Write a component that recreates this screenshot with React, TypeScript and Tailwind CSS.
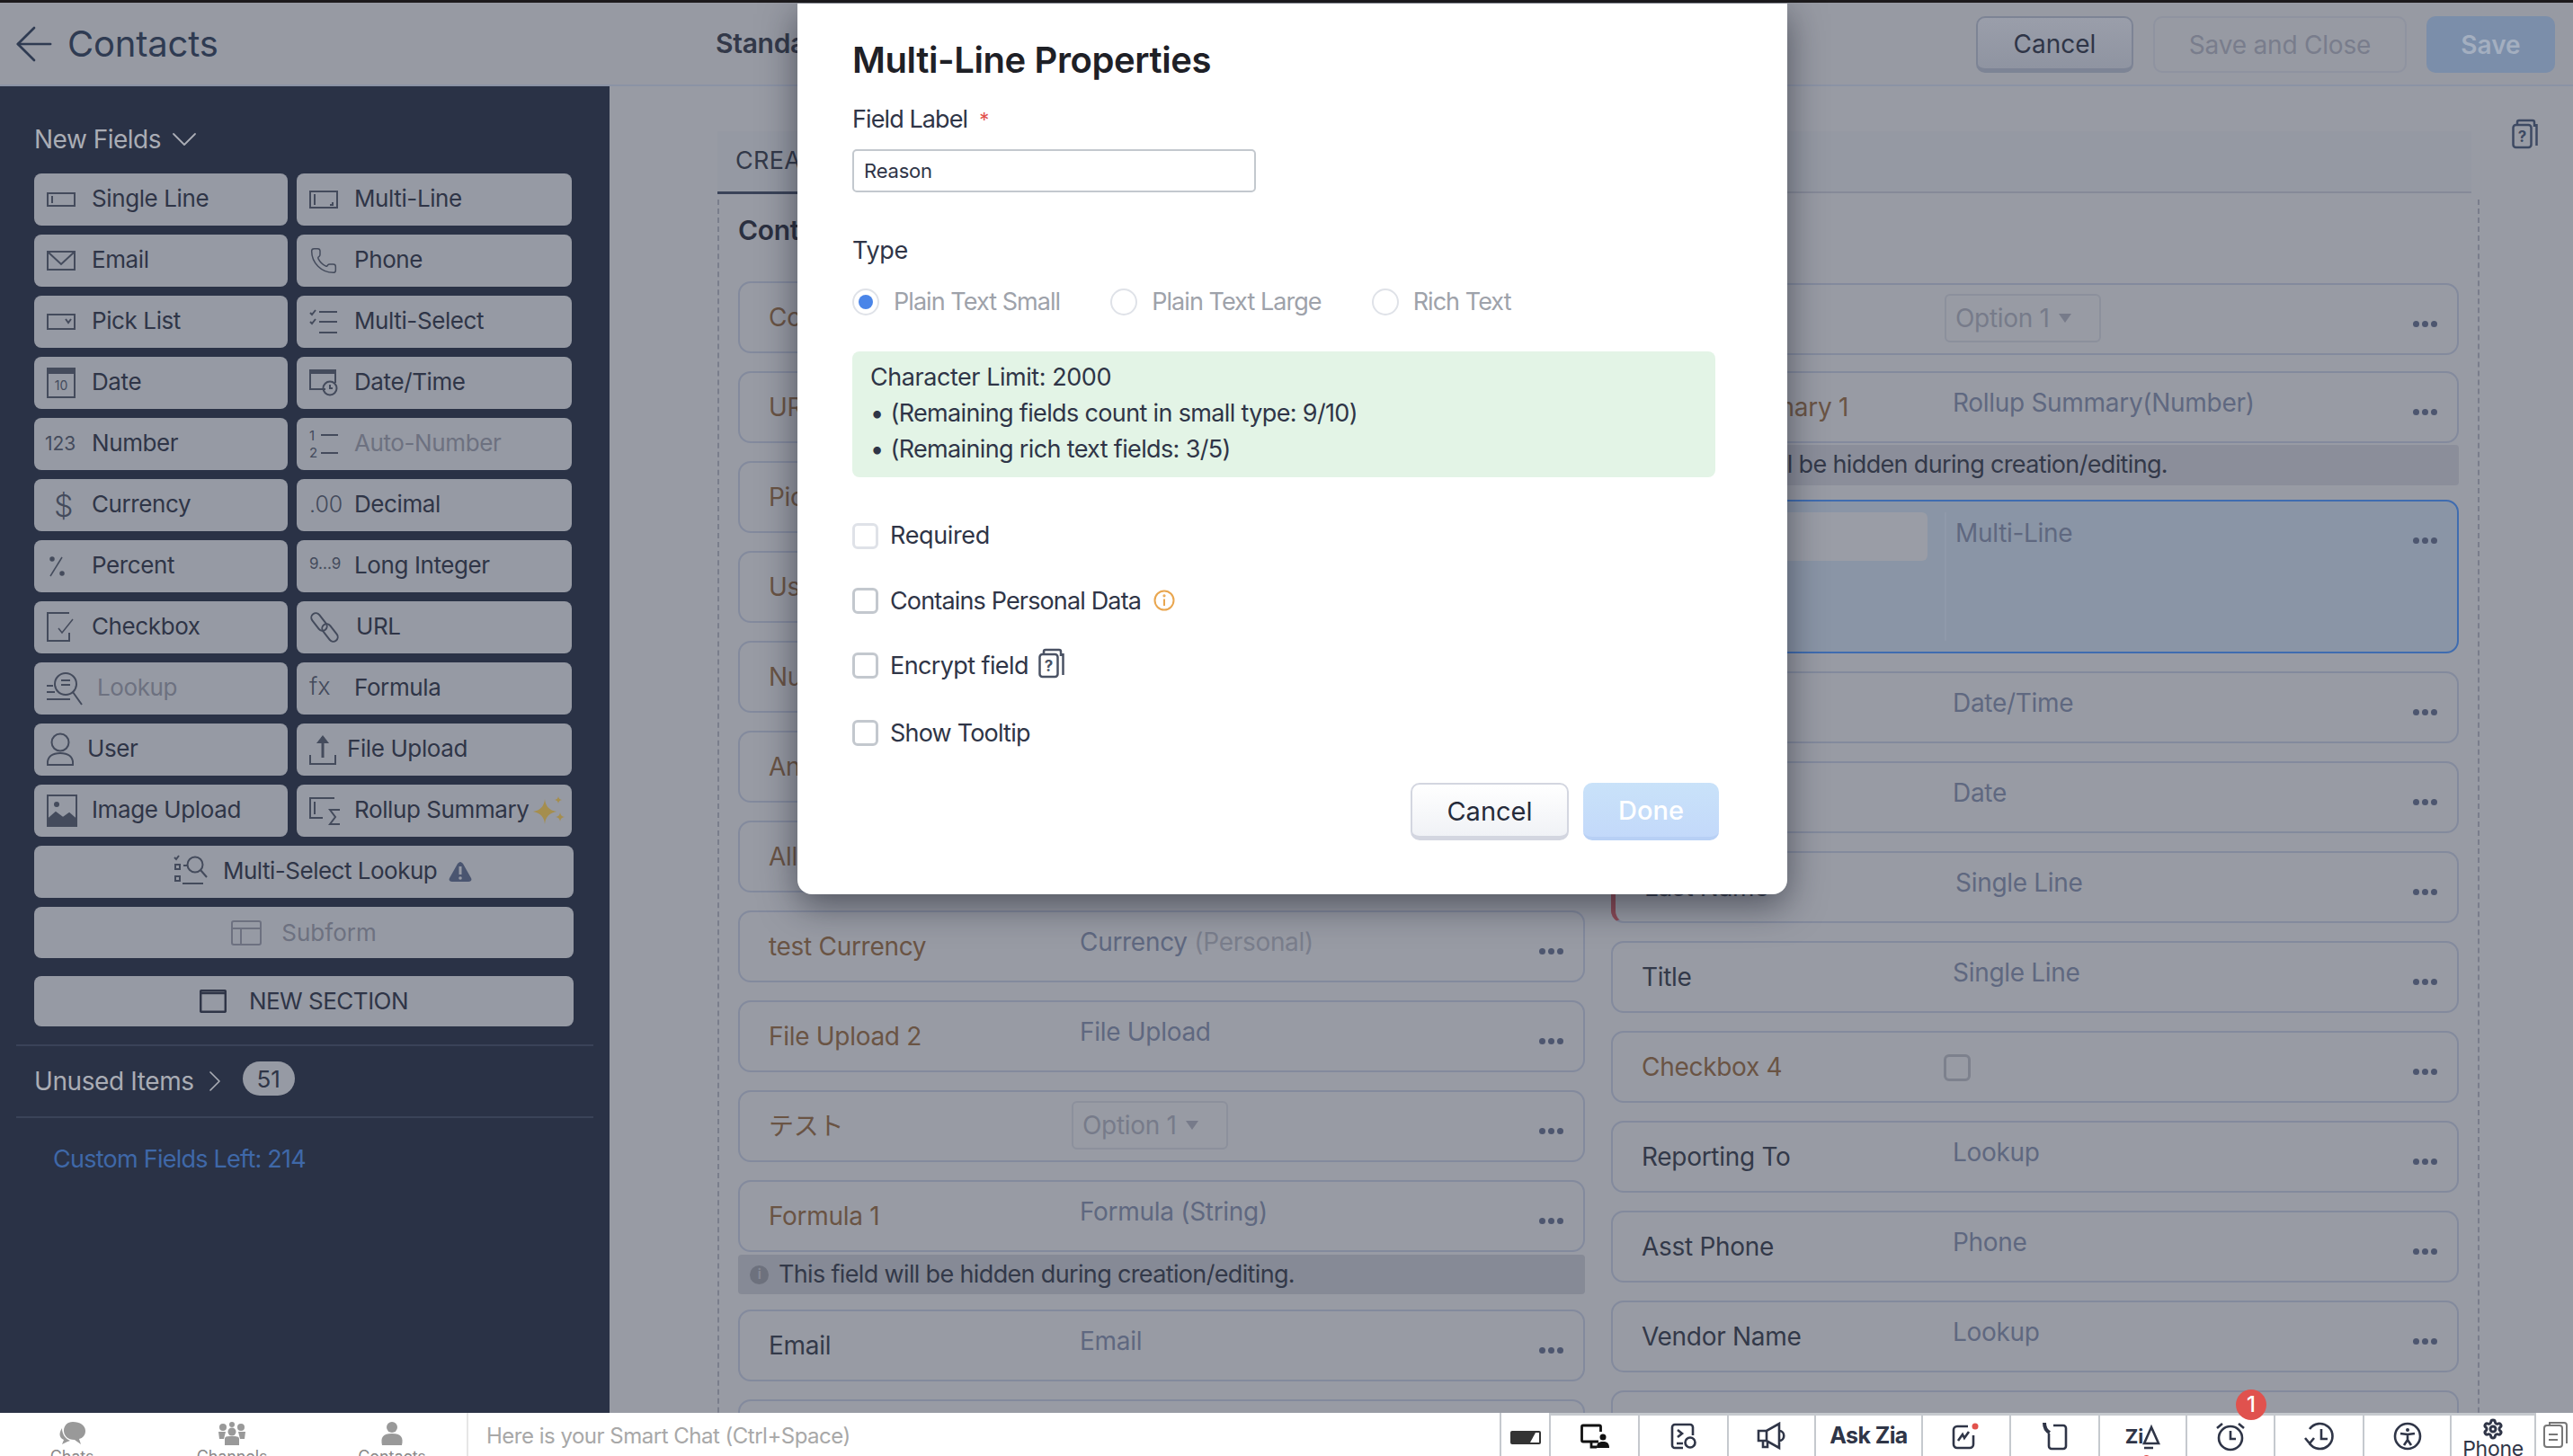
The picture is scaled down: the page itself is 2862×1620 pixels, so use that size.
import { ArrowLeft, ChevronDown, ChevronRight, Phone as PhoneGlyph, Settings } from "lucide-react";
import type { ReactNode } from "react";

// thin line icons for the field palette, all take their colour from the text
function Line({ w, h, children, className }: { w: number; h: number; children: ReactNode; className?: string }) {
  return (
    <svg width={w} height={h} viewBox={`0 0 ${w} ${h}`} fill="none" stroke="currentColor" strokeWidth="2" className={className}>
      {children}
    </svg>
  );
}

const SingleLineIcon = () => (
  <Line w={32} h={16}><rect x="1" y="1" width="30" height="14" /><path d="M6 4v8" /></Line>
);
const MultiLineIcon = () => (
  <Line w={32} h={20}><rect x="1" y="1" width="30" height="18" /><path d="M6 4v12M26 13v3h-3" /></Line>
);
const EmailIcon = () => (
  <Line w={32} h={22}><rect x="1" y="1" width="30" height="20" /><path d="M1 1l15 14L31 1" /></Line>
);
const PhoneIcon = () => <PhoneGlyph size={32} strokeWidth={1.1} />;
const PickListIcon = () => (
  <Line w={32} h={18}><rect x="1" y="1" width="30" height="16" /><path d="M21 6l3 4 3-4" /></Line>
);
const MultiSelectIcon = () => (
  <Line w={32} h={32}><path d="M1 6l2 2 4-5M1 16l2 2 4-5M11 5h20M11 16h20M11 28h20" /></Line>
);
const DateIcon = () => (
  <svg width="32" height="34" viewBox="0 0 32 34" fill="none" stroke="currentColor" strokeWidth="2">
    <rect x="1" y="3" width="30" height="30" />
    <rect x="1" y="1" width="30" height="5" fill="currentColor" />
    <text x="16" y="25" textAnchor="middle" fontSize="14" stroke="none" fill="currentColor">10</text>
  </svg>
);
const DateTimeIcon = () => (
  <Line w={32} h={30}>
    <path d="M18 22H1V1h28v14" /><path d="M1 3h28" strokeWidth="4" /><circle cx="23" cy="21" r="7.5" /><path d="M23 17v4h3" />
  </Line>
);
const AutoNumberIcon = () => (
  <svg width="32" height="36" viewBox="0 0 32 36" fill="none" stroke="currentColor" strokeWidth="2">
    <text x="0" y="14" fontSize="15" stroke="none" fill="currentColor">1</text>
    <text x="0" y="33" fontSize="15" stroke="none" fill="currentColor">2</text>
    <path d="M13 8h19M13 28h19" />
  </svg>
);
const PercentIcon = () => (
  <svg width="20" height="26" viewBox="0 0 20 26" fill="none" stroke="currentColor" strokeWidth="1.5">
    <path d="M15 3L2 24" /><circle cx="4" cy="5" r="2" fill="currentColor" /><circle cx="15" cy="21" r="2" fill="currentColor" />
  </svg>
);
const CheckboxIcon = () => (
  <Line w={30} h={34}><path d="M25 1H1v31h24v-9" /><path d="M13 18l4 5 12-15" strokeWidth="1.5" /></Line>
);
const UrlIcon = () => (
  <svg width="34" height="34" viewBox="0 0 34 34" fill="none" stroke="currentColor" strokeWidth="2">
    <rect x="0" y="6" width="22" height="10" rx="5" transform="rotate(52 11 11)" />
    <rect x="12" y="18" width="22" height="10" rx="5" transform="rotate(52 23 23)" />
  </svg>
);
const LookupIcon = () => (
  <Line w={40} h={40}>
    <circle cx="21" cy="15" r="12" /><path d="M16 11h10M16 16h10M29 24l10 14M0 17h7M0 24h9M0 32h26" />
  </Line>
);
const UserIcon = () => (
  <Line w={30} h={38}>
    <circle cx="15" cy="11" r="9.5" /><path d="M1 36c-1-10 6-13 14-13s15 3 14 13z" />
  </Line>
);
const UploadIcon = () => (
  <svg width="30" height="36" viewBox="0 0 30 36" fill="none" stroke="currentColor" strokeWidth="2">
    <path d="M1 24v10h28V24" /><path d="M15 27V4" strokeWidth="3" /><path d="M8 11l7-9 7 9z" fill="currentColor" stroke="none" />
  </svg>
);
const ImageIcon = () => (
  <svg width="34" height="36" viewBox="0 0 34 36" fill="none" stroke="currentColor" strokeWidth="2">
    <rect x="1" y="1" width="32" height="34" />
    <path d="M1 35V28l9-8 8 6 7-5 8 7v7z" fill="currentColor" />
    <circle cx="11" cy="11" r="3" fill="currentColor" stroke="none" />
  </svg>
);
const RollupIcon = () => (
  <Line w={36} h={32}>
    <path d="M28 2H1v22h14M6 6v14" /><path d="M34 15H23l6 8-6 8h11" />
  </Line>
);
const Sparkle = () => (
  <svg width="36" height="32" viewBox="0 0 36 32" fill="#a58e4e" className="ml-[4px] shrink-0">
    <path d="M13 3Q14 15 26 17 14 19 13 31 12 19 0 17 12 15 13 3z" />
    <path d="M28 0q.5 3.500 4 4-3.500.5-4 4-.5-3.500-4-4 3.500-.5 4-4zM30 18q.5 4.500 5 5-4.500.5-5 5-.5-4.500-5-5 4.500-.5 5-5z" />
  </svg>
);
const MultiLookupIcon = () => (
  <Line w={38} h={38}>
    <path d="M1 3l2 2 3-4M11 12h5M10 32h23" />
    <rect x="2" y="11" width="5" height="5" /><rect x="2" y="24" width="5" height="5" />
    <circle cx="24" cy="11" r="8.5" /><path d="M30 17l7 8" />
  </Line>
);
const WarnIcon = () => (
  <svg width="26" height="24" viewBox="0 0 26 24">
    <path d="M13 1c1 0 2 1 3 2l9 16c1 2 0 4-3 4H4c-3 0-4-2-3-4l9-16c1-1 2-2 3-2z" fill="#4a5570" />
    <path d="M13 6v9" stroke="#969aa4" strokeWidth="3" /><circle cx="13" cy="19" r="1.8" fill="#969aa4" />
  </svg>
);
const SubformIcon = () => (
  <Line w={34} h={28}><rect x="1" y="1" width="32" height="26" rx="2" /><path d="M1 9h32M11 9v18" /></Line>
);
const SectionIcon = () => (
  <svg width="30" height="26" viewBox="0 0 30 26" fill="none" stroke="currentColor" strokeWidth="2.5">
    <rect x="1.2" y="1.2" width="27.6" height="23.6" rx="1" /><path d="M1 4h28" />
  </svg>
);
const Glyph = ({ children, className }: { children: ReactNode; className: string }) => (
  <span className={className}>{children}</span>
);

type Field = { label: string; icon: ReactNode; off?: boolean; iconW?: number; extra?: ReactNode };

const FIELD_ROWS: [Field, Field][] = [
  [{ label: "Single Line", icon: <SingleLineIcon /> }, { label: "Multi-Line", icon: <MultiLineIcon /> }],
  [{ label: "Email", icon: <EmailIcon /> }, { label: "Phone", icon: <PhoneIcon /> }],
  [{ label: "Pick List", icon: <PickListIcon /> }, { label: "Multi-Select", icon: <MultiSelectIcon /> }],
  [{ label: "Date", icon: <DateIcon /> }, { label: "Date/Time", icon: <DateTimeIcon /> }],
  [
    { label: "Number", icon: <Glyph className="text-[21px] -ml-[2px]">123</Glyph> },
    { label: "Auto-Number", icon: <AutoNumberIcon />, off: true },
  ],
  [
    { label: "Currency", icon: <Glyph className="ml-[8px] text-[34px] font-light">$</Glyph> },
    { label: "Decimal", icon: <Glyph className="text-[25px] font-light">.00</Glyph> },
  ],
  [
    { label: "Percent", icon: <span className="ml-[2px] flex"><PercentIcon /></span> },
    { label: "Long Integer", icon: <Glyph className="-mt-[4px] text-[17px]">9...9</Glyph> },
  ],
  [{ label: "Checkbox", icon: <CheckboxIcon /> }, { label: "URL", icon: <UrlIcon />, iconW: 52 }],
  [
    { label: "Lookup", icon: <LookupIcon />, off: true, iconW: 56 },
    { label: "Formula", icon: <Glyph className="-mt-[3px] text-[27px] font-light">fx</Glyph> },
  ],
  [{ label: "User", icon: <UserIcon />, iconW: 45 }, { label: "File Upload", icon: <UploadIcon />, iconW: 42 }],
  [{ label: "Image Upload", icon: <ImageIcon /> }, { label: "Rollup Summary", icon: <RollupIcon />, extra: <Sparkle /> }],
];

function FieldButton({ field, className }: { field: Field; className: string }) {
  return (
    <div className={`flex h-[58px] items-center rounded-[8px] bg-[#969aa4] pl-[14px] ${className} ${field.off ? "text-[#6d7180]" : "text-[#2f3547]"}`}>
      <span className="flex shrink-0 items-center text-[#444b5c]" style={{ width: field.iconW ?? 50 }}>
        {field.icon}
      </span>
      <span className="-mt-[3px] whitespace-nowrap text-[26px] tracking-[-0.4px]">{field.label}</span>
      {field.extra}
    </div>
  );
}

function Sidebar() {
  return (
    <aside className="flex w-[678px] shrink-0 flex-col bg-[#2a3246]">
      <div className="mt-[40px] flex h-[38px] items-center pl-[38px] text-[#aaadb5]">
        <span className="text-[28px] tracking-[-0.5px]">New Fields</span>
        <ChevronDown size={48} strokeWidth={0.9} className="ml-[2px] shrink-0" />
      </div>
      <div className="mt-[19px] flex flex-col gap-[10px] pl-[38px]">
        {FIELD_ROWS.map(([a, b]) => (
          <div key={a.label} className="flex gap-[10px]">
            <FieldButton field={a} className="w-[282px]" />
            <FieldButton field={b} className="w-[306px]" />
          </div>
        ))}
        <div className="flex h-[58px] w-[600px] items-center rounded-[8px] bg-[#969aa4] pl-[155px] text-[#2f3547]">
          <span className="flex text-[#444b5c]"><MultiLookupIcon /></span>
          <span className="-mt-[3px] ml-[17px] whitespace-nowrap text-[26px] tracking-[-0.5px]">Multi-Select Lookup</span>
          <span className="ml-[13px] flex"><WarnIcon /></span>
        </div>
        <div className="flex h-[57px] w-[600px] items-center justify-center rounded-[8px] bg-[#969aa4] text-[#6d7180]">
          <SubformIcon />
          <span className="ml-[22px] text-[26px]">Subform</span>
        </div>
        <div className="mt-[10px] flex h-[56px] w-[600px] items-center justify-center rounded-[8px] bg-[#969aa4] text-[#2f3547]">
          <SectionIcon />
          <span className="-mt-[2px] ml-[25px] text-[26px] tracking-[-0.5px]">NEW SECTION</span>
        </div>
      </div>
      <div className="mx-[18px] mt-[20px] flex h-[82px] items-center border-y-2 border-[#3a4358] pl-[20px]">
        <span className="text-[28px] tracking-[-0.4px] text-[#aaadb5]">Unused Items</span>
        <ChevronRight size={40} strokeWidth={1} className="ml-[3px] shrink-0 text-[#aaadb5]" />
        <span className="ml-[11px] flex h-[38px] w-[58px] -translate-y-[3px] items-center justify-center rounded-full bg-[#969aa4] text-[26px] text-[#2f3547]">51</span>
      </div>
      <div className="mt-[26px] pl-[59px] text-[27px] tracking-[-0.75px] text-[#3f68a8]">Custom Fields Left: 214</div>
    </aside>
  );
}

function Dots() {
  return (
    <span className="ml-auto mr-[22px] mt-[40px] flex gap-[3px]">
      <i className="size-[7px] rounded-full bg-[#4d566f]" />
      <i className="size-[7px] rounded-full bg-[#4d566f]" />
      <i className="size-[7px] rounded-full bg-[#4d566f]" />
    </span>
  );
}

function Row({ label, type, note, custom, red, children }: { label?: string; type?: string; note?: string; custom?: boolean; red?: boolean; children?: ReactNode }) {
  return (
    <div className={`flex h-[80px] shrink-0 rounded-[14px] border-2 border-[#838a9d] ${red ? "border-l-[5px] border-l-[#8d4a55]" : ""}`}>
      <span className={`w-[378px] shrink-0 self-center whitespace-nowrap pl-[32px] text-[28px] tracking-[-0.3px] ${custom ? "text-[#6a5444]" : "text-[#333949]"}`}>
        {label}
      </span>
      {type && (
        <span className="mt-[13px] h-[40px] whitespace-nowrap text-[28px] leading-[40px] tracking-[-0.3px] text-[#5f6880]">
          {type}
          {note && <span className="text-[#7a7e8c]"> {note}</span>}
        </span>
      )}
      {children}
      <Dots />
    </div>
  );
}

function OptionSelect() {
  return (
    <span className="-ml-[9px] mt-[10px] flex h-[54px] w-[174px] items-center rounded-[6px] border-2 border-[#8c909c] pl-[10px] text-[28px] tracking-[-0.3px] text-[#777b8a]">
      Option 1
      <svg width="14" height="12" viewBox="0 0 14 12" className="ml-[10px]"><path d="M0 1h14L7 11z" fill="#777b8a" /></svg>
    </span>
  );
}

function HiddenNote() {
  return (
    <div className="-mb-[3px] -mt-[17px] flex h-[44px] shrink-0 items-center rounded-[4px] bg-[#868a96] pl-[13px] text-[27px] tracking-[-0.65px] text-[#333949]">
      <span className="mr-[11px] flex size-[21px] items-center justify-center rounded-full bg-[#6d717d] text-[15px] font-bold text-[#868a96]">i</span>
      This field will be hidden during creation/editing.
    </div>
  );
}

function LeftColumn() {
  return (
    <div className="flex w-[942px] shrink-0 flex-col gap-[20px]">
      <Row label="Co" custom />
      <Row label="UR" custom />
      <Row label="Pic" custom />
      <Row label="Us" custom />
      <Row label="Nu" custom />
      <Row label="An" custom />
      <Row label="All" custom />
      <Row label="test Currency" type="Currency" note="(Personal)" custom />
      <Row label="File Upload 2" type="File Upload" custom />
      <Row label="テスト" custom><OptionSelect /></Row>
      <Row label="Formula 1" type="Formula (String)" custom />
      <HiddenNote />
      <Row label="Email" type="Email" />
      <Row />
    </div>
  );
}

function RightColumn() {
  return (
    <div className="mt-[2px] flex w-[943px] shrink-0 flex-col gap-[20px]">
      <div className="-mb-[2px]"><Row custom><OptionSelect /></Row></div>
      <Row label="Rollup Summary 1" type="Rollup Summary(Number)" custom />
      <div className="-mb-[4px] -mt-[18px] flex h-[45px] shrink-0 items-center rounded-[4px] bg-[#8b8e9a] pl-[13px] text-[27px] tracking-[-0.65px] text-[#333949]">
        <span className="mr-[11px] size-[21px]" />
        This field will be hidden during creation/editing.
      </div>
      <div className="flex h-[171px] shrink-0 rounded-[14px] border-2 border-[#3f6cb0] bg-[#8a95a6]">
        <div className="ml-[12px] mt-[12px] h-[54px] w-[338px] rounded-[6px] bg-[#9a9da6]" />
        <div className="ml-[19px] mt-[12px] mb-[12px] border-l-2 border-[#8f99aa] pl-[10px] text-[28px] leading-[46px] tracking-[-0.3px] text-[#5f6880]">Multi-Line</div>
        <Dots />
      </div>
      <Row type="Date/Time" />
      <Row type="Date" />
      <Row label="Last Name" type="Single Line" red />
      <Row label="Title" type="Single Line" />
      <Row label="Checkbox 4" custom>
        <span className="-ml-[10px] mt-[24px] size-[30px] rounded-[6px] border-[3px] border-[#7d818d]" />
      </Row>
      <Row label="Reporting To" type="Lookup" />
      <Row label="Asst Phone" type="Phone" />
      <Row label="Vendor Name" type="Lookup" />
      <Row />
    </div>
  );
}

function HelpCards({ className }: { className: string }) {
  return (
    <svg width="30" height="34" viewBox="0 0 30 34" fill="none" stroke="currentColor" strokeWidth="2.5" className={className}>
      <rect x="1.5" y="7" width="20" height="25" rx="3" />
      <path d="M6 7V4a2 2 0 0 1 2-2h15a2 2 0 0 1 2 2v5M27.500 6v24" />
      <text x="11.500" y="26" textAnchor="middle" fontSize="17" fontWeight="700" stroke="none" fill="currentColor">?</text>
    </svg>
  );
}

function Header() {
  return (
    <header className="flex h-[93px] shrink-0 items-center border-b-2 border-[#8b93a5] bg-[#979aa3]">
      <div className="flex w-[796px] shrink-0 items-center pl-[7px] text-[#2f3b52]">
        <ArrowLeft size={62} strokeWidth={1.05} />
        <span className="ml-[6px] text-[40px] tracking-[-0.2px]">Contacts</span>
      </div>
      <span className="whitespace-nowrap text-[30px] font-semibold tracking-[-0.3px] text-[#333949]">Standard</span>
      <div className="ml-auto mr-[20px] mt-[1px] flex gap-[22px]">
        <div className="flex h-[63px] w-[175px] items-center justify-center rounded-[10px] border-2 border-b-[5px] border-[#7d8495] bg-gradient-to-b from-[#9a9eaa] to-[#8f94a1] pt-[3px] text-[28px] text-[#2f3547]">Cancel</div>
        <div className="flex h-[63px] w-[282px] items-center justify-center rounded-[10px] border-2 border-[#8f93a0] pt-[2px] text-[28px] tracking-[-0.2px] text-[#797d8c]">Save and Close</div>
        <div className="flex h-[63px] w-[143px] items-center justify-center rounded-[10px] bg-[#7b8eaa] pt-[2px] text-[28px] font-semibold text-[#a4afc0]">Save</div>
      </div>
    </header>
  );
}

function Check({ label, tone, tracking, children }: { label: string; tone?: string; tracking: string; children?: ReactNode }) {
  return (
    <div className="flex h-[30px] items-center">
      <span className={`size-[29px] rounded-[6px] border-[3px] ${tone ?? "border-[#c3c8ce]"}`} />
      <span className={`ml-[13px] text-[27px] text-[#2f3547] ${tracking}`}>{label}</span>
      {children}
    </div>
  );
}

function Radio({ label, on, className }: { label: string; on?: boolean; className?: string }) {
  return (
    <div className={`flex items-center ${className ?? ""}`}>
      <span className="flex size-[30px] items-center justify-center rounded-full border-2 border-[#dfe2e8]">
        {on && <i className="size-[16px] rounded-full bg-[#4a85e8]" />}
      </span>
      <span className="ml-[16px] text-[27px] tracking-[-0.95px] text-[#9ea2aa]">{label}</span>
    </div>
  );
}

function PropertiesModal() {
  return (
    <div className="absolute left-[887px] top-[4px] flex h-[991px] w-[1101px] flex-col rounded-b-[16px] bg-white pl-[61px] pt-[39px] shadow-[0_12px_40px_rgba(20,24,36,0.55)]">
      <h2 className="h-[48px] text-[40px] font-semibold leading-[48px] tracking-[-0.4px] text-[#1e2026]">Multi-Line Properties</h2>
      <div className="mt-[24px] flex h-[36px] items-center text-[27px] tracking-[-0.9px] text-[#2f3547]">
        Field Label
        <span className="ml-[13px] text-[22px] text-[#e2524c]">*</span>
      </div>
      <div className="mt-[15px] flex h-[48px] w-[449px] items-center rounded-[5px] border-2 border-[#c3c8ce] pl-[11px] text-[22px] tracking-[-0.2px] text-[#2f3547]">Reason</div>
      <div className="mt-[47px] flex h-[36px] items-center text-[27px] tracking-[-0.35px] text-[#2f3547]">Type</div>
      <div className="mt-[24px] flex h-[30px]">
        <Radio label="Plain Text Small" on />
        <Radio label="Plain Text Large" className="ml-[56px]" />
        <Radio label="Rich Text" className="ml-[56px]" />
      </div>
      <div className="mt-[40px] h-[140px] w-[960px] rounded-[8px] bg-[#e3f4e6] pl-[20px] pt-[9px] text-[27px] leading-[40px] text-[#2f3547]">
        <div className="tracking-[-0.45px]">Character Limit: 2000</div>
        <div className="tracking-[-0.65px]"><span className="mr-[1px]">•</span> (Remaining fields count in small type: 9/10)</div>
        <div className="tracking-[-0.65px]"><span className="mr-[1px]">•</span> (Remaining rich text fields: 3/5)</div>
      </div>
      <div className="mt-[50px]"><Check label="Required" tone="border-[#dfe2e8]" tracking="tracking-[-0.35px]" /></div>
      <div className="mt-[42px]">
        <Check label="Contains Personal Data" tracking="mt-[2px] tracking-[-0.85px]">
          <svg width="24" height="24" viewBox="0 0 24 24" fill="none" stroke="#e9a64f" strokeWidth="2" className="ml-[14px]">
            <circle cx="12" cy="12" r="10.5" /><path d="M12 10.5V18" /><circle cx="12" cy="6.8" r="0.6" />
          </svg>
        </Check>
      </div>
      <div className="mt-[42px]">
        <Check label="Encrypt field" tracking="mt-[2px] tracking-[-0.6px]"><HelpCards className="ml-[11px] -mt-[5px] text-[#4a5264]" /></Check>
      </div>
      <div className="mt-[45px]"><Check label="Show Tooltip" tracking="mt-[2px] tracking-[-0.8px]" /></div>
      <div className="mr-[76px] mt-[41px] flex justify-end gap-[16px]">
        <div className="flex h-[64px] w-[176px] items-center justify-center rounded-[10px] border-2 border-b-[5px] border-[#d3d6e0] bg-gradient-to-b from-white to-[#f0f2f6] pt-[2px] text-[29px] text-[#262b3a]">Cancel</div>
        <div className="flex h-[64px] w-[151px] items-center justify-center rounded-[10px] border-b-[4px] border-[#b8d0f5] bg-gradient-to-b from-[#c9e2f9] to-[#c3d9fa] pt-[2px] text-[29px] font-medium text-white">Done</div>
      </div>
    </div>
  );
}

const ChatsIcon = () => (
  <svg width="30" height="26" viewBox="0 0 30 26" fill="#999" className="shrink-0">
    <path d="M16 0c8 0 14 4 14 10 0 5-3 8-7 9l2 6-7-5C10 20 6 15 6 10 6 4 10 0 16 0z" />
    <path d="M4 7c-4 6-3 11 2 13l-2 5 6-3 3-1C8 19 4 14 4 7z" />
  </svg>
);
const ChannelsIcon = () => (
  <svg width="30" height="26" viewBox="0 0 30 26" fill="#999" className="shrink-0">
    <circle cx="5" cy="6" r="4" /><circle cx="25" cy="6" r="4" /><circle cx="15" cy="3" r="3" /><circle cx="15" cy="11" r="4.5" />
    <path d="M0 11h8l-2 8H1zM22 11h8l-1 8h-5zM7 19c0-3 3-3 8-3s8 0 8 3v7H7z" />
  </svg>
);
const ContactsIcon = () => (
  <svg width="26" height="26" viewBox="0 0 26 26" fill="#999" className="shrink-0">
    <circle cx="13" cy="6" r="6" /><path d="M2 26c-2-9 1-13 11-13s13 4 11 13z" />
  </svg>
);

function TabItem({ icon, label }: { icon: ReactNode; label: string }) {
  return (
    <div className="flex h-[48px] w-[178px] shrink-0 flex-col items-center overflow-hidden pt-[10px]">
      {icon}
      <span className="mt-[2px] shrink-0 text-[18px] leading-[22px] tracking-[-0.1px] text-[#888]">{label}</span>
    </div>
  );
}

// bottom toolbar icons
const tool = { fill: "none", stroke: "#2f3547", strokeWidth: 2.6 } as const;
const TOOLS: { w: number; node: ReactNode }[] = [
  {
    w: 55,
    node: (
      <svg width="34" height="15" viewBox="0 0 34 15" className="mt-[7px]">
        <rect width="34" height="15" rx="2" fill="#333" />
        <path d="M22 13L28 2h4v11z" fill="#fff" />
      </svg>
    ),
  },
  {
    w: 99,
    node: (
      <svg width="32" height="28" viewBox="0 0 32 28" fill="none" stroke="#111" strokeWidth="2.8">
        <path d="M20 20H3a1.5 1.5 0 0 1-1.5-1.5v-15A1.5 1.5 0 0 1 3 2h18a1.5 1.5 0 0 1 1.5 1.5V9M12 20v6h6" />
        <circle cx="25" cy="15" r="3.5" fill="#111" stroke="none" />
        <path d="M18 27c0-6 3-7 7-7s7 1 7 7z" fill="#111" stroke="none" />
      </svg>
    ),
  },
  {
    w: 99,
    node: (
      <svg width="30" height="30" viewBox="0 0 30 30" {...tool}>
        <path d="M14 28H5a3 3 0 0 1-3-3V5a3 3 0 0 1 3-3h17a3 3 0 0 1 3 3v9M8 8l5 4-5 4M7 23h7" />
        <circle cx="22" cy="22" r="5.5" />
      </svg>
    ),
  },
  {
    w: 97,
    node: (
      <svg width="34" height="32" viewBox="0 0 34 32" {...tool}>
        <path d="M2 10h9L25 2v27l-14-8H2zM11 10v11M7 21v7h5v-6M25 10c7 0 7 11 0 11" />
      </svg>
    ),
  },
  { w: 119, node: <span className="text-[25px] font-bold tracking-[-0.6px] text-[#2f3547]">Ask Zia</span> },
  {
    w: 98,
    node: (
      <svg width="32" height="30" viewBox="0 0 32 30" {...tool}>
        <path d="M24 14v10a4 4 0 0 1-4 4H6a4 4 0 0 1-4-4V8a4 4 0 0 1 4-4h12M7 20l5-7 2 4 5-7" />
        <circle cx="26" cy="4" r="3.5" fill="#e2524c" stroke="none" />
      </svg>
    ),
  },
  {
    w: 99,
    node: (
      <svg width="28" height="34" viewBox="0 0 28 34" {...tool}>
        <path d="M12 5h11a3 3 0 0 1 3 3v20a3 3 0 0 1-3 3H10a3 3 0 0 1-3-3V14" />
        <path d="M2 2c0 5 2 9 6 11" strokeWidth="4" />
      </svg>
    ),
  },
  {
    w: 97,
    node: (
      <span className="relative flex items-center text-[22px] font-bold leading-none text-[#2f3547]">
        Zi
        <svg width="20" height="32" viewBox="0 0 20 32" {...tool} className="-ml-[1px]">
          <path d="M10 6L2 24h16zM2 29h10" />
        </svg>
        <i className="absolute -bottom-[12px] left-[20px] size-[7px] rounded-full bg-[#e2524c]" />
      </span>
    ),
  },
  {
    w: 98,
    node: (
      <svg width="36" height="36" viewBox="0 0 36 36" {...tool}>
        <circle cx="18" cy="20" r="13" /><path d="M18 12v9h6M3 9l6-5M33 9l-6-5" />
      </svg>
    ),
  },
  {
    w: 99,
    node: (
      <svg width="36" height="36" viewBox="0 0 36 36" {...tool}>
        <path d="M6 26a14 14 0 1 0 0-16" transform="translate(1 0)" /><path d="M20 10v11h7M2 20l5 6 5-6" />
      </svg>
    ),
  },
  {
    w: 97,
    node: (
      <svg width="32" height="32" viewBox="0 0 32 32" {...tool}>
        <circle cx="16" cy="16" r="14" /><circle cx="16" cy="9" r="2" fill="#2f3547" stroke="none" />
        <path d="M8 13l8 1 8-1M16 14v6M12 26l4-6 4 6" />
      </svg>
    ),
  },
  {
    w: 94,
    node: (
      <div className="flex flex-col items-center pt-[5px]">
        <Settings size={24} strokeWidth={3} className="shrink-0 text-[#2f3547]" />
        <span className="-mt-[1px] text-[23px] leading-[22px] tracking-[-0.3px] text-[#2f3547]">Phone</span>
      </div>
    ),
  },
  {
    w: 43,
    node: (
      <svg width="30" height="32" viewBox="0 0 30 32" fill="none" stroke="#777" strokeWidth="2" className="ml-[2px] shrink-0">
        <rect x="2" y="6" width="20" height="24" rx="3" /><path d="M8 6V3h16a3 3 0 0 1 3 3v20M7 16h10M7 22h10" />
      </svg>
    ),
  },
];

function BottomBar() {
  return (
    <footer className="relative flex h-[48px] shrink-0 bg-white">
      <div className="flex w-[519px] shrink-0 overflow-hidden">
        <div className="-ml-[9px] flex"><TabItem icon={<ChatsIcon />} label="Chats" /><TabItem icon={<ChannelsIcon />} label="Channels" /><TabItem icon={<ContactsIcon />} label="Contacts" /></div>
      </div>
      <div className="flex flex-1 items-center border-l-2 border-[#e6e6e6] pl-[20px] pt-[3px] text-[24px] tracking-[-0.5px] text-[#a8a8a8]">
        Here is your Smart Chat (Ctrl+Space)
      </div>
      <div className="flex shrink-0">
        {TOOLS.map((t, i) => (
          <div
            key={i}
            className={`flex h-[48px] items-center justify-center overflow-hidden border-l-2 border-[#c5c9ce] ${i > 0 && i < 12 ? "border-t-[3px]" : ""}`}
            style={{ width: t.w }}
          >
            {t.node}
          </div>
        ))}
      </div>
      <span className="absolute left-[2487px] -top-[26px] flex h-[34px] w-[34px] items-center justify-center rounded-full bg-[#e0524e] text-[24px] font-medium text-white">1</span>
    </footer>
  );
}

export default function App() {
  return (
    <div className="relative flex h-[1620px] w-[2862px] flex-col overflow-hidden bg-[#989ba4] [font-family:Inter,'Noto_Sans_CJK_JP',sans-serif]">
      <div className="h-[3px] shrink-0 bg-[#1c1a1c]" />
      <Header />
      <div className="flex min-h-0 flex-1">
        <Sidebar />
        <main className="relative min-w-0 flex-1 overflow-hidden">
          <HelpCards className="absolute left-[2116px] top-[36px] text-[#3e4a63]" />
          <div className="ml-[120px] mt-[50px] flex h-[69px] w-[1951px] items-center border-b-2 border-[#868a98] bg-[#9599a3] pl-[20px]">
            <span className="text-[27px] tracking-[0.3px] text-[#333949]">CREATE</span>
          </div>
          <div className="ml-[120px] h-[3px] w-[200px] -translate-y-[2px] bg-[#3a4358]" />
          <div className="ml-[120px] mt-[4px] h-[1400px] w-[1960px] border-x-2 border-dashed border-[#7a7e8c] pl-[21px] pt-[16px]">
            <div className="h-[36px] text-[30px] font-semibold leading-[36px] tracking-[-0.3px] text-[#2b3040]">Contact</div>
            <div className="mt-[39px] flex gap-[29px]">
              <LeftColumn />
              <RightColumn />
            </div>
          </div>
        </main>
      </div>
      <BottomBar />
      <PropertiesModal />
    </div>
  );
}
